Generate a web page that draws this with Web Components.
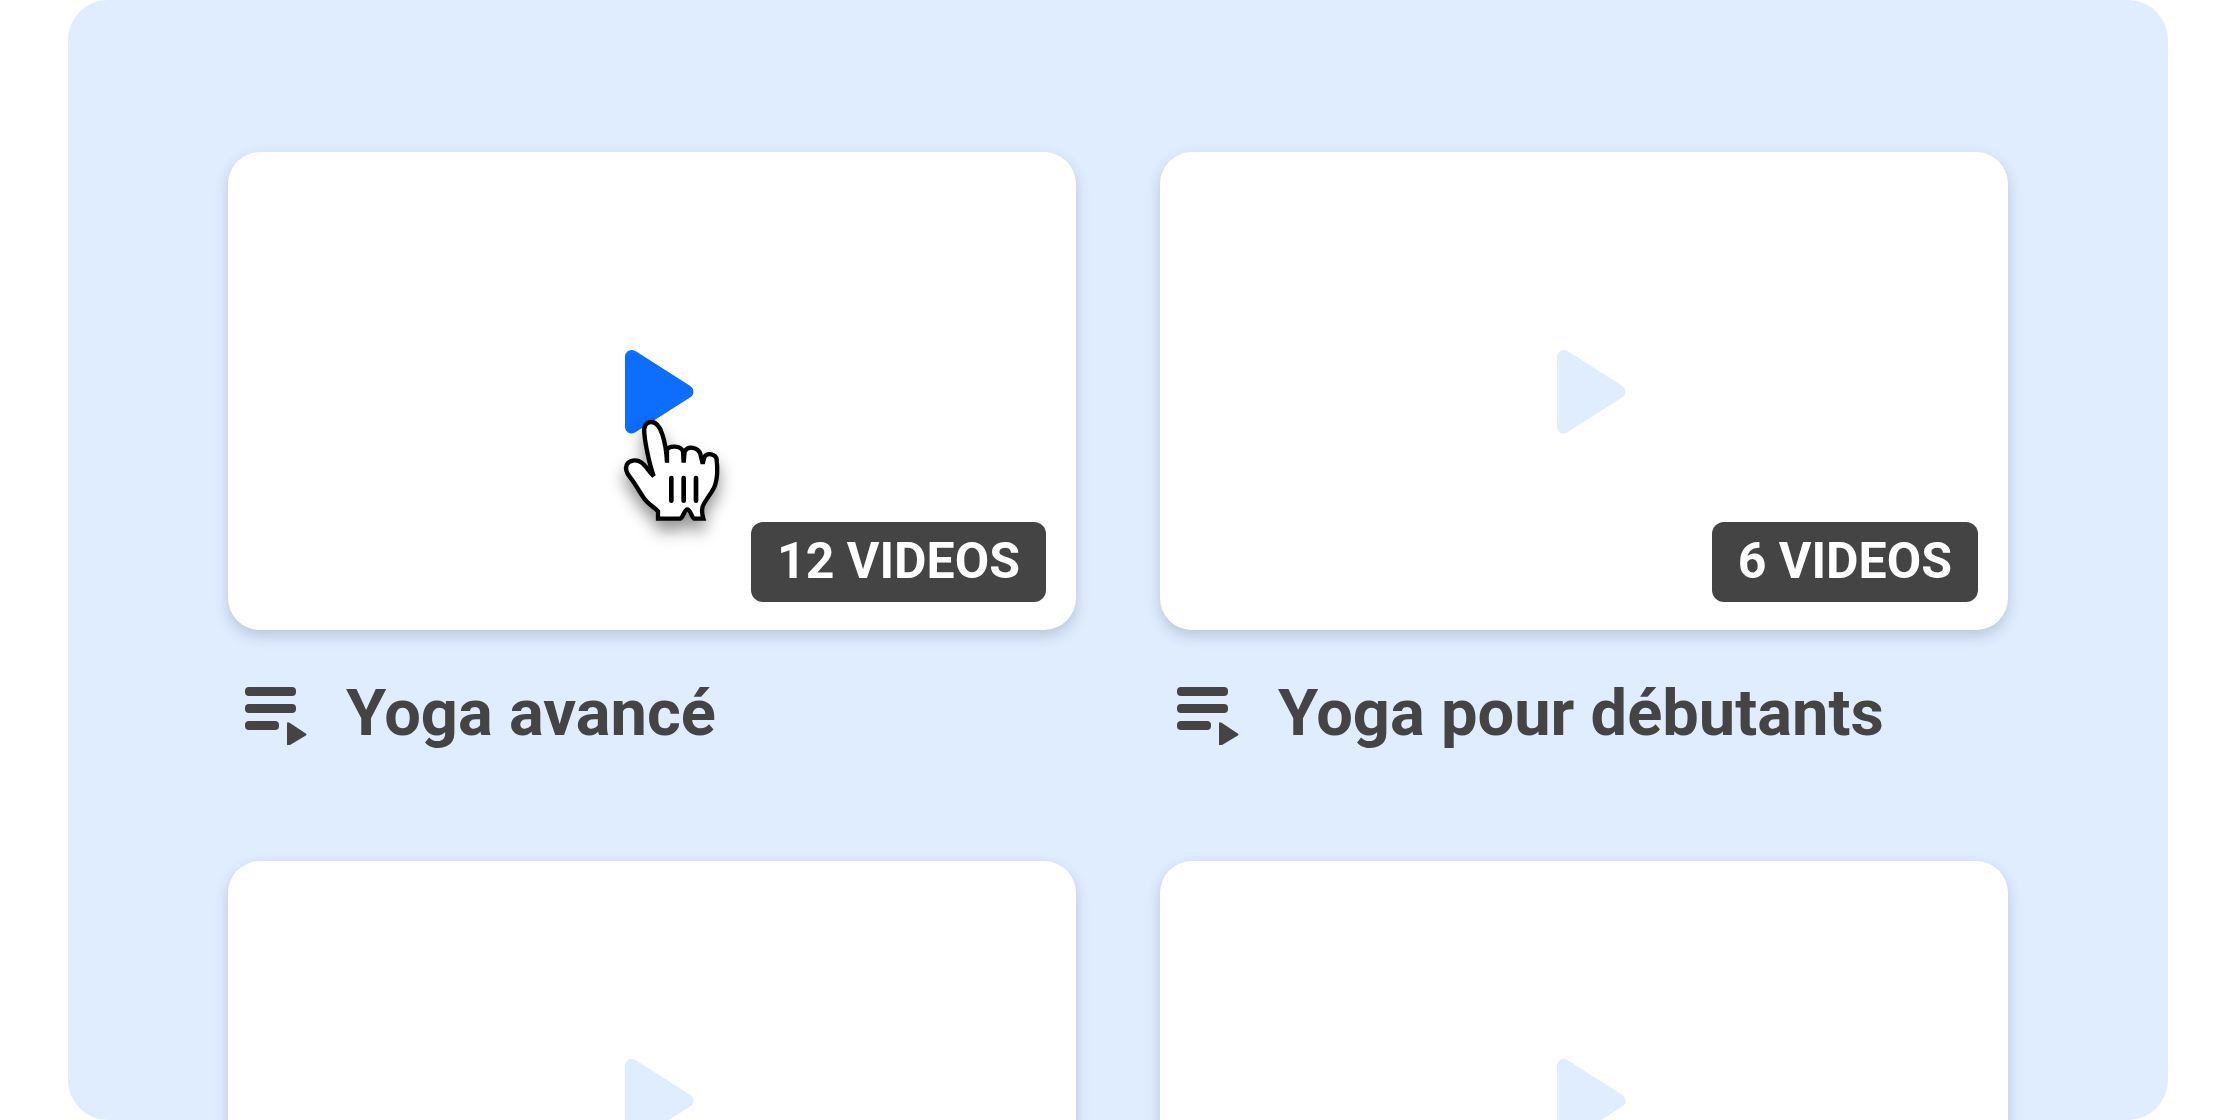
<!DOCTYPE html>
<html lang="fr">
<head>
<meta charset="utf-8">
<meta name="viewport" content="width=device-width, initial-scale=1">
<title>Playlists</title>
<style>
  body {
    margin: 0;
    background: #fff;
    color: #444;
    font-family: Roboto, 'Liberation Sans', sans-serif;
  }
</style>
</head>
<body>
<playlist-gallery>
  <playlist-card label="Yoga avancé" count="12" active>
    <hand-cursor slot="cursor"></hand-cursor>
  </playlist-card>
  <playlist-card label="Yoga pour débutants" count="6"></playlist-card>
  <playlist-card></playlist-card>
  <playlist-card></playlist-card>
</playlist-gallery>

<script>
const galleryTemplate = document.createElement('template');
galleryTemplate.innerHTML = `
  <style>
    :host {
      display: block;
      box-sizing: border-box;
      height: 100vh;
      margin: 0 72px 0 68px;
      padding: 152px 160px 0;
      overflow: hidden;
      border-radius: 40px;
      background: #e0ecff;
    }

    .grid {
      display: grid;
      grid-template-columns: repeat(2, minmax(0, 1fr));
      column-gap: 84px;
      row-gap: 72px;
    }
  </style>
  <main class="grid"><slot></slot></main>
`;

class PlaylistGallery extends HTMLElement {
  constructor() {
    super();
    this.attachShadow({ mode: 'open' }).appendChild(galleryTemplate.content.cloneNode(true));
  }
}
customElements.define('playlist-gallery', PlaylistGallery);

const playTemplate = document.createElement('template');
playTemplate.innerHTML = `
  <style>
    :host {
      display: block;
      position: relative;
    }

    button {
      display: block;
      padding: 0;
      border: 0;
      background: none;
      color: var(--play-color, #e0ecff);
      cursor: pointer;
    }

    svg {
      display: block;
      width: 162px;
      height: 162px;
      fill: currentColor;
    }
  </style>
  <button type="button" aria-label="Lire">
    <svg viewBox="0 0 24 24" aria-hidden="true">
      <path d="M8 6.92v10.36c0 .79.87 1.27 1.54.84l8.14-5.18c.62-.39.62-1.29 0-1.69L9.54 6.08C8.87 5.65 8 6.13 8 6.92z"/>
    </svg>
  </button>
  <slot></slot>
`;

class PlayButton extends HTMLElement {
  constructor() {
    super();
    this.attachShadow({ mode: 'open' }).appendChild(playTemplate.content.cloneNode(true));
  }
}
customElements.define('play-button', PlayButton);

const cursorTemplate = document.createElement('template');
cursorTemplate.innerHTML = `
  <style>
    :host {
      display: block;
      position: absolute;
      top: 107px;
      left: 49px;
      pointer-events: none;
    }

    svg {
      display: block;
      width: 100px;
      height: 110px;
      overflow: visible;
      filter: drop-shadow(0 10px 8px rgba(0, 0, 0, 0.42));
    }
  </style>
  <svg viewBox="60 260 300 330" aria-hidden="true" stroke="#000" stroke-width="13">
    <path fill="#fff" d="M161 437
      C150 407 136 345 133 309
      C130 288 138 276 153 275
      C171 274 180 291 187 312
      C193 330 199 351 201 397
      V358
      C209 344 242 346 249 363
      L251 397
      L254 363
      C264 345 294 350 301 371
      L308 400
      L313 380
      C321 366 348 370 350 388
      C353 414 352 444 345 465
      C337 489 309 515 307 533
      C305 544 307 555 310 565
      H283
      C274 561 271 537 262 537
      C253 537 250 562 240 565
      H174
      V543
      C164 531 145 522 133 505
      C117 483 107 462 91 442
      C81 430 75 416 80 404
      C86 389 110 386 123 396
      C139 407 146 424 161 437z"/>
    <path fill="none" stroke-width="14" stroke-linecap="round" d="M214 443v68M251 443v68M288 443v68"/>
  </svg>
`;

class HandCursor extends HTMLElement {
  constructor() {
    super();
    this.attachShadow({ mode: 'open' }).appendChild(cursorTemplate.content.cloneNode(true));
  }
}
customElements.define('hand-cursor', HandCursor);

const badgeTemplate = document.createElement('template');
badgeTemplate.innerHTML = `
  <style>
    :host {
      display: block;
      padding: 9px 26px 11px;
      border-radius: 12px;
      background: #444;
      color: #fff;
      font-size: 50px;
      font-weight: 700;
      line-height: 60px;
      white-space: nowrap;
    }
  </style>
  <slot></slot>
`;

class CountBadge extends HTMLElement {
  constructor() {
    super();
    this.attachShadow({ mode: 'open' }).appendChild(badgeTemplate.content.cloneNode(true));
  }
}
customElements.define('count-badge', CountBadge);

const cardTemplate = document.createElement('template');
cardTemplate.innerHTML = `
  <style>
    :host {
      display: block;
    }

    :host([active]) {
      --play-color: #0d6efd;
    }

    .thumb {
      position: relative;
      display: flex;
      align-items: center;
      justify-content: center;
      aspect-ratio: 848 / 478;
      border-radius: 32px;
      background: #fff;
      box-shadow: 0 6px 14px rgba(50, 70, 90, 0.22);
    }

    count-badge {
      position: absolute;
      right: 30px;
      bottom: 28px;
    }

    .caption {
      display: flex;
      align-items: center;
      gap: 38px;
      min-height: 80px;
      margin-top: 43px;
      padding: 0 16px 36px;
    }

    .caption svg {
      flex: none;
      width: 64px;
      height: 64px;
      fill: currentColor;
    }

    h2 {
      margin: 0;
      font-size: 65px;
      font-weight: 700;
      line-height: 80px;
      white-space: nowrap;
    }
  </style>
  <div class="thumb">
    <play-button><slot name="cursor"></slot></play-button>
  </div>
  <div class="caption"></div>
`;

const listIcon = `
  <svg viewBox="0 0 64 64" aria-hidden="true">
    <rect x="1" y="6" width="51" height="9" rx="4"/>
    <rect x="1" y="23" width="51" height="9" rx="4"/>
    <rect x="1" y="40" width="34" height="9" rx="4"/>
    <path d="M43 43c0-2 1-2 3-1l15 10c2 1 2 2 0 3L46 64c-2 1-3 1-3-1z"/>
  </svg>
`;

class PlaylistCard extends HTMLElement {
  constructor() {
    super();
    this.attachShadow({ mode: 'open' }).appendChild(cardTemplate.content.cloneNode(true));
  }

  connectedCallback() {
    const label = this.getAttribute('label');
    const count = this.getAttribute('count');

    if (count) {
      const badge = document.createElement('count-badge');
      badge.textContent = `${count} VIDEOS`;
      this.shadowRoot.querySelector('.thumb').append(badge);
    }

    if (label) {
      const title = document.createElement('h2');
      title.textContent = label;
      const caption = this.shadowRoot.querySelector('.caption');
      caption.innerHTML = listIcon;
      caption.append(title);
    }
  }
}
customElements.define('playlist-card', PlaylistCard);
</script>
</body>
</html>
